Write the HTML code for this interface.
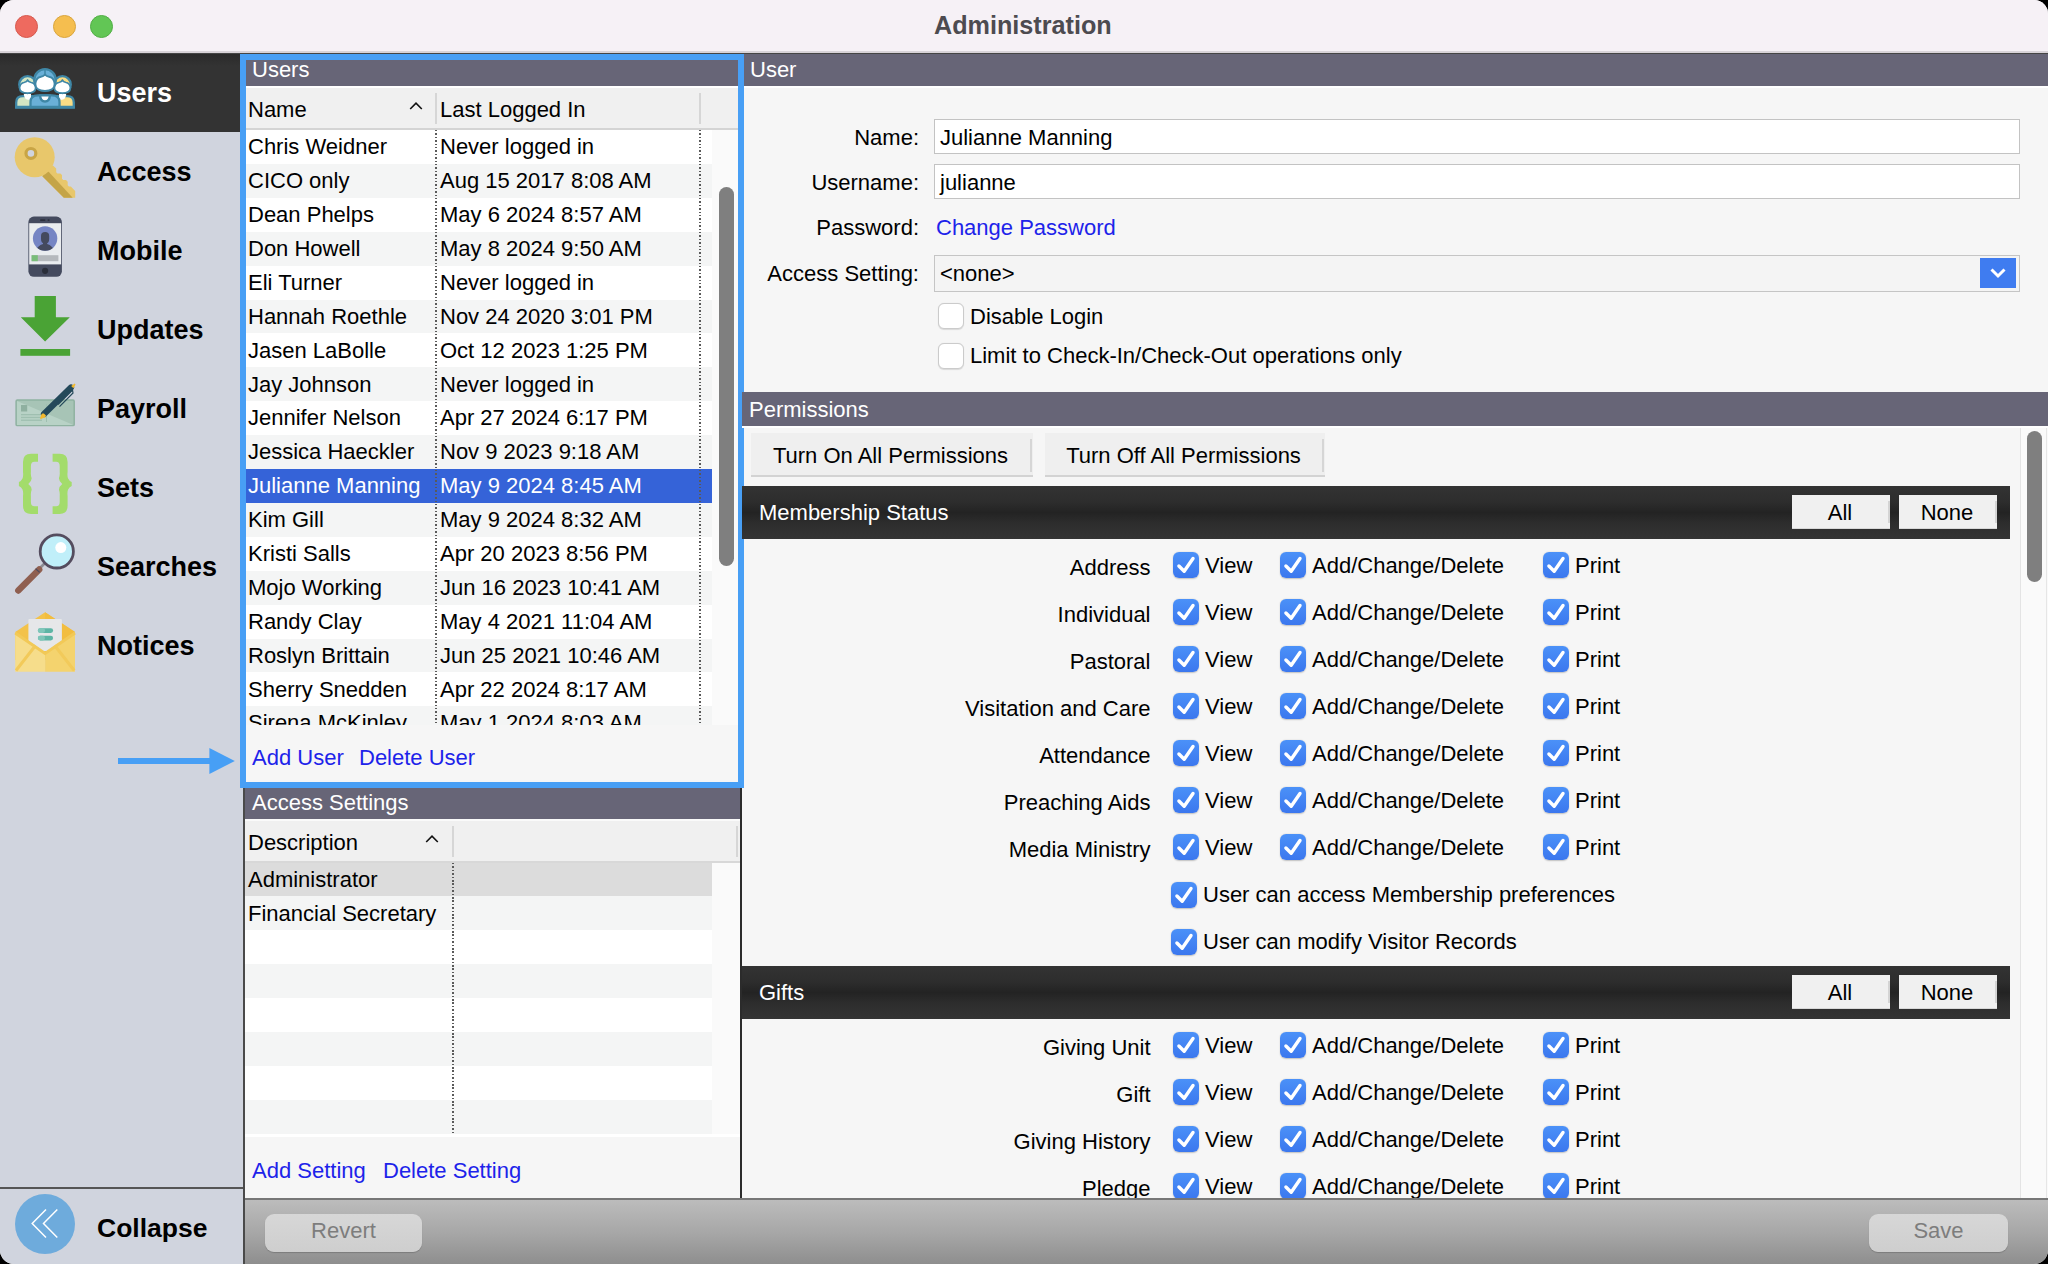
<!DOCTYPE html><html><head><meta charset="utf-8"><title>Administration</title><style>
*{box-sizing:border-box;margin:0;padding:0}
html,body{width:2048px;height:1264px;overflow:hidden;background:#000}
body{font-family:"Liberation Sans",sans-serif;font-size:22px;letter-spacing:0;color:#000;position:relative}
.abs{position:absolute}
#win{position:absolute;left:0;top:0;width:2048px;height:1264px;border-radius:14px;overflow:hidden;background:#f6f6f6}
.t{position:absolute;white-space:nowrap;line-height:1}
.cb{position:absolute;width:26px;height:26px;border-radius:6px;background:linear-gradient(#4b91f8,#3b77ee);box-shadow:0 0.5px 1.5px rgba(0,0,0,.22)}
.cb svg{position:absolute;left:0;top:0}
.cbe{position:absolute;width:26px;height:26px;border-radius:6px;background:#fff;border:1px solid #cbcbcb;box-shadow:0 0.5px 1px rgba(0,0,0,.12)}
.sec{position:absolute;left:742px;width:1268px;height:53px;background:linear-gradient(#333 0%,#2d2d2d 30%,#232323 50%,#2d2d2d 70%,#343434 100%)}
.sbtn{position:absolute;height:34px;width:98px;background:#f0f0f0}
.dot{position:absolute;width:1.6px;background:repeating-linear-gradient(#5a5a5a 0,#5a5a5a 1.5px,transparent 1.5px,transparent 3.4px)}
</style></head><body><div id="win">
<div class="abs" style="left:0px;top:0px;width:2048px;height:51px;background:#f6f1f6;"></div>
<div class="abs" style="left:0px;top:51px;width:2048px;height:1.5px;background:#d8d3d8;"></div>
<div class="abs" style="left:0px;top:52.5px;width:2048px;height:1.5px;background:rgba(0,0,0,.72);"></div>
<div class="abs" style="left:14.5px;top:14.5px;width:23px;height:23px;border-radius:50%;background:#ee6a5f;border:0.8px solid #d65a4f"></div>
<div class="abs" style="left:52.5px;top:14.5px;width:23px;height:23px;border-radius:50%;background:#f5be4f;border:0.8px solid #d9a53e"></div>
<div class="abs" style="left:89.5px;top:14.5px;width:23px;height:23px;border-radius:50%;background:#62c655;border:0.8px solid #51ae45"></div>
<div class="t" style="top:13.00px;left:934px;font-size:25.2px;font-weight:700;color:#4d4b50;">Administration</div>
<div class="abs" style="left:0px;top:54px;width:243px;height:1210px;background:#d0d4de;"></div>
<div class="abs" style="left:0px;top:54px;width:243px;height:77.7px;background:linear-gradient(#2a2a2a,#333 12px,#333);"></div>
<div class="abs" style="left:243px;top:54px;width:2px;height:1210px;background:#4a4a4a;"></div>
<div class="t" style="top:80.00px;left:97px;font-size:27px;font-weight:700;color:#fff;">Users</div>
<div class="t" style="top:159.00px;left:97px;font-size:27px;font-weight:700;color:#000;">Access</div>
<div class="t" style="top:238.00px;left:97px;font-size:27px;font-weight:700;color:#000;">Mobile</div>
<div class="t" style="top:317.00px;left:97px;font-size:27px;font-weight:700;color:#000;">Updates</div>
<div class="t" style="top:396.00px;left:97px;font-size:27px;font-weight:700;color:#000;">Payroll</div>
<div class="t" style="top:475.00px;left:97px;font-size:27px;font-weight:700;color:#000;">Sets</div>
<div class="t" style="top:554.00px;left:97px;font-size:27px;font-weight:700;color:#000;">Searches</div>
<div class="t" style="top:633.00px;left:97px;font-size:27px;font-weight:700;color:#000;">Notices</div>
<svg class="abs" style="left:0;top:54px" width="243" height="640" viewBox="0 54 243 640">
<!-- Users icon -->
<g stroke="#3f87a6" stroke-width="2.3" stroke-linejoin="round">
  <!-- left person -->
  <path d="M16.2 107 V102.5 Q16.2 96.2 23 96.2 H33 V107 Z" fill="#d3e6c3"/>
  <path d="M23.8 94 Q24.2 99.5 28 99.8 L31 99.8 V94 Z" fill="#fff" stroke="none"/>
  <circle cx="27.6" cy="84.6" r="8.4" fill="#d3e6c3"/>
  <path d="M19.6 87.5 Q20.5 83 24 82.5 Q26.8 82 27.6 80 Q28.4 82 31.2 82.5 Q34.7 83 35.6 87.5 V88 Q35.6 93 27.6 93 Q19.6 93 19.6 88 Z" fill="#fff" stroke-width="1.7"/>
  <!-- right person -->
  <path d="M73.8 107 V102.5 Q73.8 96.2 67 96.2 H57 V107 Z" fill="#f9dc85"/>
  <path d="M66.2 94 Q65.8 99.5 62 99.8 L59 99.8 V94 Z" fill="#fff" stroke="none"/>
  <circle cx="62.4" cy="84.6" r="8.4" fill="#f9dc85"/>
  <path d="M54.4 87.5 Q55.3 83 58.8 82.5 Q61.6 82 62.4 80 Q63.2 82 66 82.5 Q69.5 83 70.4 87.5 V88 Q70.4 93 62.4 93 Q54.4 93 54.4 88 Z" fill="#fff" stroke-width="1.7"/>
  <!-- center person -->
  <path d="M30.5 107 V102 Q30.5 95.3 38 95.3 H52 Q59.5 95.3 59.5 102 V107 Z" fill="#6ab0d8"/>
  <path d="M40 95.3 Q40.5 101.5 45 101.5 Q49.5 101.5 50 95.3 Z" fill="#fff"/>
  <circle cx="45" cy="80" r="10.8" fill="#6ab0d8"/>
  <path d="M35.5 83 Q36.3 77.8 40.2 77 Q43.8 76.4 45 74.5 Q46.2 76.4 49.8 77 Q53.7 77.8 54.5 83 V84.5 Q54.5 90.8 45 90.8 Q35.5 90.8 35.5 84.5 Z" fill="#fff" stroke-width="1.8"/>
  <path d="M45 74.5 V70" stroke-width="1.5"/>
  <path d="M15 107.6 H75" stroke-width="2.4"/>
</g>

<!-- Key -->
<g>
  <path d="M44 171 L53 165.4 L56.2 168.6 V172.3 L57.4 173.5 H60.4 L62 175.1 V178.8 L63.2 180 H66 L67.7 181.7 V185.3 L68.9 186.5 H70.8 L75.2 190.9 V197.7 H63.8 L42.3 176.2 Z" fill="#e8c76b"/>
  <path d="M42.3 176.2 L47.7 170.8 L72.7 197.7 H63.8 Z" fill="#c4a447"/>
  <circle cx="34.7" cy="157.2" r="20" fill="#e8c76b"/>
  <circle cx="30.9" cy="153.4" r="4.9" fill="#d0d4de" stroke="#c9a545" stroke-width="3.2"/>
</g>

<!-- Mobile -->
<g>
  <rect x="28.4" y="216.6" width="33.5" height="60.2" rx="5.5" fill="#444a5e"/>
  <rect x="29.2" y="223.2" width="31.9" height="41.2" fill="#e9ecef"/>
  <rect x="40" y="219.2" width="5.5" height="1.8" rx="0.9" fill="#2b2f3d"/>
  <rect x="47.5" y="219.2" width="2.2" height="1.8" rx="0.9" fill="#2b2f3d"/>
  <circle cx="45.1" cy="238.5" r="12.2" fill="#7585c4"/>
  <clipPath id="avc"><circle cx="45.1" cy="238.5" r="12.2"/></clipPath>
  <g clip-path="url(#avc)" fill="#444a5e">
    <path d="M41 236 Q41 232 45.1 232 Q49.2 232 49.2 236 V239 Q49.2 243.5 45.1 243.5 Q41 243.5 41 239 Z"/>
    <path d="M43 242 H47.2 V244 Q53 246 55 252 H35 Q37 246 43 244 Z"/>
  </g>
  <rect x="31.6" y="255.2" width="26.8" height="6" fill="#b5b9bd"/>
  <rect x="31.6" y="255.2" width="6.2" height="6" fill="#79bd79"/>
  <circle cx="45.1" cy="270.8" r="3.1" fill="#2a2e3a"/>
</g>

<!-- Updates -->
<g fill="#4aa335">
  <path d="M34.7 296 H55.9 V317.2 H69.8 L45.1 341.6 L20.8 317.2 H34.7 Z"/>
  <rect x="20.4" y="349" width="49.7" height="6.8"/>
</g>

<!-- Payroll -->
<g>
  <rect x="16.1" y="400.1" width="58.1" height="25.5" rx="1.2" fill="#a7c4b6" stroke="#8fb2a1" stroke-width="1.5"/>
  <path d="M17 401 L73.5 425 H17 Z" fill="#b8d2c6"/>
  <rect x="21" y="405" width="6.2" height="6.5" fill="#8fb0a0"/>
  <rect x="21" y="414" width="21" height="1.3" fill="#9fbfb0"/>
  <rect x="21" y="416.8" width="21" height="1.3" fill="#9fbfb0"/>
  <rect x="21" y="419.6" width="21" height="1.3" fill="#9fbfb0"/>
  <rect x="46" y="404" width="1" height="18" fill="#9fbfb0"/>
  <path d="M58 404.5 L72.5 390 L73 393 L59.5 406.7" fill="none" stroke="#24495a" stroke-width="1.2"/>
  <path d="M44 414 L71 387.5" stroke="#24495a" stroke-width="6.2" stroke-linecap="round"/>
  <path d="M40.3 418.8 L42.2 413.6 L45.8 417.2 Z" fill="#f2b92e"/>
  <path d="M43.8 413.6 Q41 413 40.2 418.9 Q45 418 46 415.5 Z" fill="#f2b92e"/>
  <path d="M71.2 386 L74.6 383.5 L75.5 384.6 L73.4 388.2 Z" fill="#f2b92e"/>
</g>

<!-- Sets -->
<path d="M38 453.8 H31 Q23 453.8 23 462 V472 Q23.5 476 22.5 478.5 Q21.5 480.8 18.9 482 V486 Q21.5 487.2 22.5 489.5 Q23.5 492 23 496 V505.5 Q23 513.9 31 513.9 H38 V506.3 H34.5 Q30.9 506.3 30.9 502 V496 Q30.6 492.5 31.6 490 Q32 487 28.3 484 Q32 481 31.6 478 Q30.6 475.5 30.9 472 V466 Q30.9 461.7 34.5 461.7 H38 Z" fill="#a3dc6b"/>
<path d="M 52.6 453.8 H 59.6 Q 67.6 453.8 67.6 462.0 V 472.0 Q 67.1 476.0 68.1 478.5 Q 69.1 480.8 71.7 482.0 V 486.0 Q 69.1 487.2 68.1 489.5 Q 67.1 492.0 67.6 496.0 V 505.5 Q 67.6 513.9 59.6 513.9 H 52.6 V 506.3 H 56.1 Q 59.7 506.3 59.7 502.0 V 496.0 Q 60.0 492.5 59.0 490.0 Q 58.6 487.0 62.3 484.0 Q 58.6 481.0 59.0 478.0 Q 60.0 475.5 59.7 472.0 V 466.0 Q 59.7 461.7 56.1 461.7 H 52.6 Z" fill="#a3dc6b"/>

<!-- Searches -->
<g>
  <path d="M40.5 567.5 L44.5 563.5" stroke="#8d8d95" stroke-width="2.6"/>
  <path d="M18.3 590.6 L39.2 569.5" stroke="#8f5f50" stroke-width="6.4" stroke-linecap="round"/>
  <path d="M35.6 568.6 L39.6 572.4" stroke="#4c4a5c" stroke-width="1.3"/>
  <circle cx="56.8" cy="551.4" r="16.6" fill="#c0eff9" stroke="#544c5e" stroke-width="2.8"/>
  <circle cx="60.8" cy="547.6" r="5.5" fill="#ffffff"/>
</g>

<!-- Notices -->
<g>
  <path d="M15.2 632 L45.1 612.3 L75 632 V660 H15.2 Z" fill="#f3c24a"/>
  <path d="M45.1 612.3 L75 632 V660 H45.1 Z" fill="#f2bd3f"/>
  <rect x="28.4" y="619" width="33.5" height="32" rx="1" fill="#e6e7e9"/>
  <rect x="37.9" y="628.3" width="15.2" height="4.6" rx="2.3" fill="#5db5a5"/>
  <rect x="37.9" y="635.8" width="15.2" height="4.6" rx="2.3" fill="#5db5a5"/>
  <rect x="37.9" y="628.3" width="7.2" height="4.6" rx="2.3" fill="#7fc6b9"/>
  <rect x="37.9" y="635.8" width="7.2" height="4.6" rx="2.3" fill="#7fc6b9"/>
  <path d="M15.2 632 L45.1 652.8 L45.1 671.8 H15.2 Z" fill="#f6dd8b"/>
  <path d="M75 632 L45.1 652.8 L45.1 671.8 H75 Z" fill="#f4d36e"/>
  <path d="M16 670.5 L35.5 645.5 M74.2 670.5 L54.7 645.5" stroke="#f2ca5a" stroke-width="3"/>
  <path d="M15.2 633 L45.1 653.5 L75 633" fill="none" stroke="#f2c957" stroke-width="3"/>
</g>
</svg>

<div class="abs" style="left:0px;top:1187px;width:243px;height:2px;background:#555555;"></div>
<div class="abs" style="left:15px;top:1194px;width:60px;height:60px;border-radius:50%;background:#6eabdc"></div>
<svg class="abs" style="left:15px;top:1194px" width="60" height="60"><path d="M42.3 15.5 L28.5 29.5 L42.3 43.5 M31 15.5 L17.2 29.5 L31 43.5" fill="none" stroke="#fff" stroke-width="1.5"/></svg>
<div class="t" style="top:1215.00px;left:97px;font-size:26.5px;font-weight:700;">Collapse</div>
<svg class="abs" style="left:110px;top:740px" width="130" height="40"><rect x="8" y="18" width="92" height="6" fill="#479ff5"/><path d="M99.4 8 L124.8 21 L99.4 34 Z" fill="#479ff5"/></svg>
<div class="abs" style="left:245px;top:54px;width:495px;height:32px;background:#676577;"></div>
<div class="t" style="top:59.00px;left:252px;color:#fff;">Users</div>
<div class="abs" style="left:245px;top:86px;width:495px;height:2px;background:#ffffff;"></div>
<div class="abs" style="left:245px;top:88px;width:495px;height:40px;background:#f0f0f0;"></div>
<div class="abs" style="left:245px;top:128px;width:495px;height:2px;background:#d4d4d4;"></div>
<div class="t" style="top:99.00px;left:248px;">Name</div>
<svg class="abs" style="left:408px;top:100px" width="16" height="12"><path d="M2.2 9 L8 3.2 L13.8 9" fill="none" stroke="#111" stroke-width="1.6"/></svg>
<div class="abs" style="left:435px;top:93px;width:1.5px;height:31px;background:#d6d6d6;"></div>
<div class="t" style="top:99.00px;left:440px;">Last Logged In</div>
<div class="abs" style="left:699px;top:93px;width:1.5px;height:31px;background:#d6d6d6;"></div>
<div class="abs" style="left:245px;top:130px;width:493px;height:595px;overflow:hidden;background:#fafafa">
<div class="abs" style="left:0px;top:0.0px;width:467px;height:34px;background:#ffffff;"></div>
<div class="t" style="top:6.00px;left:3px;">Chris Weidner</div>
<div class="t" style="top:6.00px;left:195px;">Never logged in</div>
<div class="abs" style="left:0px;top:33.9px;width:467px;height:34px;background:#f4f5f5;"></div>
<div class="t" style="top:40.00px;left:3px;">CICO only</div>
<div class="t" style="top:40.00px;left:195px;">Aug 15 2017 8:08 AM</div>
<div class="abs" style="left:0px;top:67.8px;width:467px;height:34px;background:#ffffff;"></div>
<div class="t" style="top:74.00px;left:3px;">Dean Phelps</div>
<div class="t" style="top:74.00px;left:195px;">May 6 2024 8:57 AM</div>
<div class="abs" style="left:0px;top:101.7px;width:467px;height:34px;background:#f4f5f5;"></div>
<div class="t" style="top:108.00px;left:3px;">Don Howell</div>
<div class="t" style="top:108.00px;left:195px;">May 8 2024 9:50 AM</div>
<div class="abs" style="left:0px;top:135.6px;width:467px;height:34px;background:#ffffff;"></div>
<div class="t" style="top:142.00px;left:3px;">Eli Turner</div>
<div class="t" style="top:142.00px;left:195px;">Never logged in</div>
<div class="abs" style="left:0px;top:169.5px;width:467px;height:34px;background:#f4f5f5;"></div>
<div class="t" style="top:176.00px;left:3px;">Hannah Roethle</div>
<div class="t" style="top:176.00px;left:195px;">Nov 24 2020 3:01 PM</div>
<div class="abs" style="left:0px;top:203.4px;width:467px;height:34px;background:#ffffff;"></div>
<div class="t" style="top:210.00px;left:3px;">Jasen LaBolle</div>
<div class="t" style="top:210.00px;left:195px;">Oct 12 2023 1:25 PM</div>
<div class="abs" style="left:0px;top:237.3px;width:467px;height:34px;background:#f4f5f5;"></div>
<div class="t" style="top:244.00px;left:3px;">Jay Johnson</div>
<div class="t" style="top:244.00px;left:195px;">Never logged in</div>
<div class="abs" style="left:0px;top:271.2px;width:467px;height:34px;background:#ffffff;"></div>
<div class="t" style="top:277.00px;left:3px;">Jennifer Nelson</div>
<div class="t" style="top:277.00px;left:195px;">Apr 27 2024 6:17 PM</div>
<div class="abs" style="left:0px;top:305.1px;width:467px;height:34px;background:#f4f5f5;"></div>
<div class="t" style="top:311.00px;left:3px;">Jessica Haeckler</div>
<div class="t" style="top:311.00px;left:195px;">Nov 9 2023 9:18 AM</div>
<div class="abs" style="left:0px;top:339.0px;width:467px;height:34px;background:#3563d8;"></div>
<div class="t" style="top:345.00px;left:3px;color:#fff;">Julianne Manning</div>
<div class="t" style="top:345.00px;left:195px;color:#fff;">May 9 2024 8:45 AM</div>
<div class="abs" style="left:0px;top:372.9px;width:467px;height:34px;background:#f4f5f5;"></div>
<div class="t" style="top:379.00px;left:3px;">Kim Gill</div>
<div class="t" style="top:379.00px;left:195px;">May 9 2024 8:32 AM</div>
<div class="abs" style="left:0px;top:406.8px;width:467px;height:34px;background:#ffffff;"></div>
<div class="t" style="top:413.00px;left:3px;">Kristi Salls</div>
<div class="t" style="top:413.00px;left:195px;">Apr 20 2023 8:56 PM</div>
<div class="abs" style="left:0px;top:440.7px;width:467px;height:34px;background:#f4f5f5;"></div>
<div class="t" style="top:447.00px;left:3px;">Mojo Working</div>
<div class="t" style="top:447.00px;left:195px;">Jun 16 2023 10:41 AM</div>
<div class="abs" style="left:0px;top:474.6px;width:467px;height:34px;background:#ffffff;"></div>
<div class="t" style="top:481.00px;left:3px;">Randy Clay</div>
<div class="t" style="top:481.00px;left:195px;">May 4 2021 11:04 AM</div>
<div class="abs" style="left:0px;top:508.5px;width:467px;height:34px;background:#f4f5f5;"></div>
<div class="t" style="top:515.00px;left:3px;">Roslyn Brittain</div>
<div class="t" style="top:515.00px;left:195px;">Jun 25 2021 10:46 AM</div>
<div class="abs" style="left:0px;top:542.4px;width:467px;height:34px;background:#ffffff;"></div>
<div class="t" style="top:549.00px;left:3px;">Sherry Snedden</div>
<div class="t" style="top:549.00px;left:195px;">Apr 22 2024 8:17 AM</div>
<div class="abs" style="left:0px;top:576.3px;width:467px;height:34px;background:#f4f5f5;"></div>
<div class="t" style="top:582.00px;left:3px;">Sirena McKinley</div>
<div class="t" style="top:582.00px;left:195px;">May 1 2024 8:03 AM</div>
<div class="dot" style="left:190px;top:0;height:595px"></div>
<div class="dot" style="left:454px;top:0;height:595px"></div>
<div class="abs" style="left:474px;top:57px;width:15px;height:379px;background:#7f7f7f;border-radius:8px"></div>
</div>
<div class="t" style="top:747.00px;left:252px;color:#1d23ea;">Add User</div>
<div class="t" style="top:747.00px;left:359px;color:#1d23ea;">Delete User</div>
<div class="abs" style="left:245px;top:788px;width:495px;height:31px;background:#676577;"></div>
<div class="t" style="top:792.00px;left:252px;color:#fff;">Access Settings</div>
<div class="abs" style="left:245px;top:819px;width:495px;height:1.5px;background:#fafafa;"></div>
<div class="abs" style="left:245px;top:820.5px;width:495px;height:40.5px;background:#f0f0f0;"></div>
<div class="abs" style="left:245px;top:861px;width:495px;height:1.5px;background:#d8d8d8;"></div>
<div class="t" style="top:832.00px;left:248px;">Description</div>
<svg class="abs" style="left:424px;top:833px" width="16" height="12"><path d="M2.2 9 L8 3.2 L13.8 9" fill="none" stroke="#111" stroke-width="1.6"/></svg>
<div class="abs" style="left:452px;top:826px;width:1.5px;height:31px;background:#d6d6d6;"></div>
<div class="abs" style="left:736px;top:826px;width:1.5px;height:31px;background:#d6d6d6;"></div>
<div class="abs" style="left:245px;top:862.5px;width:495px;height:271.5px;overflow:hidden;background:#fafafa">
<div class="abs" style="left:0px;top:0.0px;width:467px;height:34px;background:#dcdcdc;"></div>
<div class="t" style="top:6.00px;left:3px;">Administrator</div>
<div class="abs" style="left:0px;top:33.9px;width:467px;height:34px;background:#f4f5f5;"></div>
<div class="t" style="top:40.00px;left:3px;">Financial Secretary</div>
<div class="abs" style="left:0px;top:67.8px;width:467px;height:34px;background:#ffffff;"></div>
<div class="abs" style="left:0px;top:101.7px;width:467px;height:34px;background:#f4f5f5;"></div>
<div class="abs" style="left:0px;top:135.6px;width:467px;height:34px;background:#ffffff;"></div>
<div class="abs" style="left:0px;top:169.5px;width:467px;height:34px;background:#f4f5f5;"></div>
<div class="abs" style="left:0px;top:203.4px;width:467px;height:34px;background:#ffffff;"></div>
<div class="abs" style="left:0px;top:237.3px;width:467px;height:34px;background:#f4f5f5;"></div>
<div class="abs" style="left:0px;top:271.2px;width:467px;height:34px;background:#ffffff;"></div>
<div class="dot" style="left:207px;top:0;height:272px"></div>
</div>
<div class="abs" style="left:245px;top:1134px;width:495px;height:3px;background:#ffffff;"></div>
<div class="t" style="top:1160.00px;left:252px;color:#1d23ea;">Add Setting</div>
<div class="t" style="top:1160.00px;left:383px;color:#1d23ea;">Delete Setting</div>
<div class="abs" style="left:740px;top:788px;width:1.8px;height:410px;background:#2b2b2b;"></div>
<div class="abs" style="left:240px;top:54px;width:504px;height:734px;border:6px solid #489ff5"></div>
<div class="abs" style="left:744px;top:54px;width:1304px;height:32px;background:#676577;"></div>
<div class="t" style="top:59.00px;left:750px;color:#fff;">User</div>
<div class="abs" style="left:744px;top:86px;width:1304px;height:2px;background:#ffffff;"></div>
<div class="t" style="top:127.00px;right:1129px;">Name:</div>
<div class="t" style="top:172.00px;right:1129px;">Username:</div>
<div class="t" style="top:217.00px;right:1129px;">Password:</div>
<div class="t" style="top:263.00px;right:1129px;">Access Setting:</div>
<div class="abs" style="left:934px;top:119px;width:1086px;height:35px;background:#fff;border:1.5px solid #c3c3c3"></div>
<div class="t" style="top:127.00px;left:940px;">Julianne Manning</div>
<div class="abs" style="left:934px;top:164px;width:1086px;height:35px;background:#fff;border:1.5px solid #c3c3c3"></div>
<div class="t" style="top:172.00px;left:940px;">julianne</div>
<div class="t" style="top:217.00px;left:936px;color:#1d23ea;">Change Password</div>
<div class="abs" style="left:934px;top:254.5px;width:1086px;height:37px;background:#f4f4f4;border:1.5px solid #c5c5c5"></div>
<div class="t" style="top:263.00px;left:940px;">&lt;none&gt;</div>
<div class="abs" style="left:1980px;top:258px;width:36px;height:30px;background:#3f7cf0;"></div>
<svg class="abs" style="left:1980px;top:258px" width="36" height="30"><path d="M11.5 11.5 L18 18 L24.5 11.5" fill="none" stroke="#fff" stroke-width="3"/></svg>
<div class="cbe" style="left:937.5px;top:303.3px"></div>
<div class="t" style="top:306.00px;left:970px;">Disable Login</div>
<div class="cbe" style="left:937.5px;top:343px"></div>
<div class="t" style="top:345.00px;left:970px;">Limit to Check-In/Check-Out operations only</div>
<div class="abs" style="left:742px;top:392px;width:1306px;height:34px;background:#676577;"></div>
<div class="t" style="top:399.00px;left:749px;color:#fff;">Permissions</div>
<div class="abs" style="left:742px;top:426px;width:1306px;height:1.5px;background:#ffffff;"></div>
<div class="abs" style="left:2020px;top:427.5px;width:28px;height:771px;background:#fafafa;border-left:1.5px solid #e4e4e4"></div>
<div class="abs" style="left:2027px;top:431px;width:15px;height:151px;background:#7f7f7f;border-radius:8px"></div>
<div class="abs" style="left:2046px;top:427.5px;width:1px;height:771px;background:#e6e6e6;"></div>
<div class="abs" style="left:751px;top:433px;width:282px;height:44px;background:#efefef;border-bottom:2px solid #d3d3d3"></div>
<div class="abs" style="left:1030px;top:439px;width:2px;height:33px;background:#d6d6d6;"></div>
<div class="t" style="top:445.00px;left:751px;width:279px;text-align:center;">Turn On All Permissions</div>
<div class="abs" style="left:1045px;top:433px;width:280px;height:44px;background:#efefef;border-bottom:2px solid #d3d3d3"></div>
<div class="abs" style="left:1322px;top:439px;width:2px;height:33px;background:#d6d6d6;"></div>
<div class="t" style="top:445.00px;left:1045px;width:277px;text-align:center;">Turn Off All Permissions</div>
<div class="abs" style="left:742px;top:427.5px;width:1278px;height:770.5px;overflow:hidden">
<div class="abs" style="left:-742px;top:-427.5px;width:2048px;height:1264px">
<div class="sec" style="top:486px"></div>
<div class="t" style="top:502.00px;left:759px;color:#fff;">Membership Status</div>
<div class="sbtn" style="left:1792px;top:495px"></div>
<div class="abs" style="left:1888px;top:501px;width:2px;height:22px;background:#d4d4d4;"></div>
<div class="abs" style="left:1792px;top:527.5px;width:98px;height:1.5px;background:#d8d8d8;"></div>
<div class="t" style="top:502.00px;left:1792px;width:96px;text-align:center;">All</div>
<div class="sbtn" style="left:1899px;top:495px"></div>
<div class="abs" style="left:1995px;top:501px;width:2px;height:22px;background:#d4d4d4;"></div>
<div class="abs" style="left:1899px;top:527.5px;width:98px;height:1.5px;background:#d8d8d8;"></div>
<div class="t" style="top:502.00px;left:1899px;width:96px;text-align:center;">None</div>
<div class="t" style="top:557.00px;right:897.5px;">Address</div>
<div class="cb" style="left:1173px;top:552.3px"><svg width="26" height="26"><path d="M5.9 14 L11.2 19.3 L20 6.5" fill="none" stroke="#fff" stroke-width="3.4" stroke-linecap="round" stroke-linejoin="round"/></svg></div>
<div class="t" style="top:555.00px;left:1205px;">View</div>
<div class="cb" style="left:1280px;top:552.3px"><svg width="26" height="26"><path d="M5.9 14 L11.2 19.3 L20 6.5" fill="none" stroke="#fff" stroke-width="3.4" stroke-linecap="round" stroke-linejoin="round"/></svg></div>
<div class="t" style="top:555.00px;left:1312px;">Add/Change/Delete</div>
<div class="cb" style="left:1543px;top:552.3px"><svg width="26" height="26"><path d="M5.9 14 L11.2 19.3 L20 6.5" fill="none" stroke="#fff" stroke-width="3.4" stroke-linecap="round" stroke-linejoin="round"/></svg></div>
<div class="t" style="top:555.00px;left:1575px;">Print</div>
<div class="t" style="top:604.00px;right:897.5px;">Individual</div>
<div class="cb" style="left:1173px;top:599.3px"><svg width="26" height="26"><path d="M5.9 14 L11.2 19.3 L20 6.5" fill="none" stroke="#fff" stroke-width="3.4" stroke-linecap="round" stroke-linejoin="round"/></svg></div>
<div class="t" style="top:602.00px;left:1205px;">View</div>
<div class="cb" style="left:1280px;top:599.3px"><svg width="26" height="26"><path d="M5.9 14 L11.2 19.3 L20 6.5" fill="none" stroke="#fff" stroke-width="3.4" stroke-linecap="round" stroke-linejoin="round"/></svg></div>
<div class="t" style="top:602.00px;left:1312px;">Add/Change/Delete</div>
<div class="cb" style="left:1543px;top:599.3px"><svg width="26" height="26"><path d="M5.9 14 L11.2 19.3 L20 6.5" fill="none" stroke="#fff" stroke-width="3.4" stroke-linecap="round" stroke-linejoin="round"/></svg></div>
<div class="t" style="top:602.00px;left:1575px;">Print</div>
<div class="t" style="top:651.00px;right:897.5px;">Pastoral</div>
<div class="cb" style="left:1173px;top:646.3px"><svg width="26" height="26"><path d="M5.9 14 L11.2 19.3 L20 6.5" fill="none" stroke="#fff" stroke-width="3.4" stroke-linecap="round" stroke-linejoin="round"/></svg></div>
<div class="t" style="top:649.00px;left:1205px;">View</div>
<div class="cb" style="left:1280px;top:646.3px"><svg width="26" height="26"><path d="M5.9 14 L11.2 19.3 L20 6.5" fill="none" stroke="#fff" stroke-width="3.4" stroke-linecap="round" stroke-linejoin="round"/></svg></div>
<div class="t" style="top:649.00px;left:1312px;">Add/Change/Delete</div>
<div class="cb" style="left:1543px;top:646.3px"><svg width="26" height="26"><path d="M5.9 14 L11.2 19.3 L20 6.5" fill="none" stroke="#fff" stroke-width="3.4" stroke-linecap="round" stroke-linejoin="round"/></svg></div>
<div class="t" style="top:649.00px;left:1575px;">Print</div>
<div class="t" style="top:698.00px;right:897.5px;">Visitation and Care</div>
<div class="cb" style="left:1173px;top:693.3px"><svg width="26" height="26"><path d="M5.9 14 L11.2 19.3 L20 6.5" fill="none" stroke="#fff" stroke-width="3.4" stroke-linecap="round" stroke-linejoin="round"/></svg></div>
<div class="t" style="top:696.00px;left:1205px;">View</div>
<div class="cb" style="left:1280px;top:693.3px"><svg width="26" height="26"><path d="M5.9 14 L11.2 19.3 L20 6.5" fill="none" stroke="#fff" stroke-width="3.4" stroke-linecap="round" stroke-linejoin="round"/></svg></div>
<div class="t" style="top:696.00px;left:1312px;">Add/Change/Delete</div>
<div class="cb" style="left:1543px;top:693.3px"><svg width="26" height="26"><path d="M5.9 14 L11.2 19.3 L20 6.5" fill="none" stroke="#fff" stroke-width="3.4" stroke-linecap="round" stroke-linejoin="round"/></svg></div>
<div class="t" style="top:696.00px;left:1575px;">Print</div>
<div class="t" style="top:745.00px;right:897.5px;">Attendance</div>
<div class="cb" style="left:1173px;top:740.3px"><svg width="26" height="26"><path d="M5.9 14 L11.2 19.3 L20 6.5" fill="none" stroke="#fff" stroke-width="3.4" stroke-linecap="round" stroke-linejoin="round"/></svg></div>
<div class="t" style="top:743.00px;left:1205px;">View</div>
<div class="cb" style="left:1280px;top:740.3px"><svg width="26" height="26"><path d="M5.9 14 L11.2 19.3 L20 6.5" fill="none" stroke="#fff" stroke-width="3.4" stroke-linecap="round" stroke-linejoin="round"/></svg></div>
<div class="t" style="top:743.00px;left:1312px;">Add/Change/Delete</div>
<div class="cb" style="left:1543px;top:740.3px"><svg width="26" height="26"><path d="M5.9 14 L11.2 19.3 L20 6.5" fill="none" stroke="#fff" stroke-width="3.4" stroke-linecap="round" stroke-linejoin="round"/></svg></div>
<div class="t" style="top:743.00px;left:1575px;">Print</div>
<div class="t" style="top:792.00px;right:897.5px;">Preaching Aids</div>
<div class="cb" style="left:1173px;top:787.3px"><svg width="26" height="26"><path d="M5.9 14 L11.2 19.3 L20 6.5" fill="none" stroke="#fff" stroke-width="3.4" stroke-linecap="round" stroke-linejoin="round"/></svg></div>
<div class="t" style="top:790.00px;left:1205px;">View</div>
<div class="cb" style="left:1280px;top:787.3px"><svg width="26" height="26"><path d="M5.9 14 L11.2 19.3 L20 6.5" fill="none" stroke="#fff" stroke-width="3.4" stroke-linecap="round" stroke-linejoin="round"/></svg></div>
<div class="t" style="top:790.00px;left:1312px;">Add/Change/Delete</div>
<div class="cb" style="left:1543px;top:787.3px"><svg width="26" height="26"><path d="M5.9 14 L11.2 19.3 L20 6.5" fill="none" stroke="#fff" stroke-width="3.4" stroke-linecap="round" stroke-linejoin="round"/></svg></div>
<div class="t" style="top:790.00px;left:1575px;">Print</div>
<div class="t" style="top:839.00px;right:897.5px;">Media Ministry</div>
<div class="cb" style="left:1173px;top:834.3px"><svg width="26" height="26"><path d="M5.9 14 L11.2 19.3 L20 6.5" fill="none" stroke="#fff" stroke-width="3.4" stroke-linecap="round" stroke-linejoin="round"/></svg></div>
<div class="t" style="top:837.00px;left:1205px;">View</div>
<div class="cb" style="left:1280px;top:834.3px"><svg width="26" height="26"><path d="M5.9 14 L11.2 19.3 L20 6.5" fill="none" stroke="#fff" stroke-width="3.4" stroke-linecap="round" stroke-linejoin="round"/></svg></div>
<div class="t" style="top:837.00px;left:1312px;">Add/Change/Delete</div>
<div class="cb" style="left:1543px;top:834.3px"><svg width="26" height="26"><path d="M5.9 14 L11.2 19.3 L20 6.5" fill="none" stroke="#fff" stroke-width="3.4" stroke-linecap="round" stroke-linejoin="round"/></svg></div>
<div class="t" style="top:837.00px;left:1575px;">Print</div>
<div class="cb" style="left:1171px;top:881.8px"><svg width="26" height="26"><path d="M5.9 14 L11.2 19.3 L20 6.5" fill="none" stroke="#fff" stroke-width="3.4" stroke-linecap="round" stroke-linejoin="round"/></svg></div>
<div class="t" style="top:884.00px;left:1203px;">User can access Membership preferences</div>
<div class="cb" style="left:1171px;top:928.8px"><svg width="26" height="26"><path d="M5.9 14 L11.2 19.3 L20 6.5" fill="none" stroke="#fff" stroke-width="3.4" stroke-linecap="round" stroke-linejoin="round"/></svg></div>
<div class="t" style="top:931.00px;left:1203px;">User can modify Visitor Records</div>
<div class="sec" style="top:966px"></div>
<div class="t" style="top:982.00px;left:759px;color:#fff;">Gifts</div>
<div class="sbtn" style="left:1792px;top:975px"></div>
<div class="abs" style="left:1888px;top:981px;width:2px;height:22px;background:#d4d4d4;"></div>
<div class="abs" style="left:1792px;top:1007.5px;width:98px;height:1.5px;background:#d8d8d8;"></div>
<div class="t" style="top:982.00px;left:1792px;width:96px;text-align:center;">All</div>
<div class="sbtn" style="left:1899px;top:975px"></div>
<div class="abs" style="left:1995px;top:981px;width:2px;height:22px;background:#d4d4d4;"></div>
<div class="abs" style="left:1899px;top:1007.5px;width:98px;height:1.5px;background:#d8d8d8;"></div>
<div class="t" style="top:982.00px;left:1899px;width:96px;text-align:center;">None</div>
<div class="t" style="top:1037.00px;right:897.5px;">Giving Unit</div>
<div class="cb" style="left:1173px;top:1032.3px"><svg width="26" height="26"><path d="M5.9 14 L11.2 19.3 L20 6.5" fill="none" stroke="#fff" stroke-width="3.4" stroke-linecap="round" stroke-linejoin="round"/></svg></div>
<div class="t" style="top:1035.00px;left:1205px;">View</div>
<div class="cb" style="left:1280px;top:1032.3px"><svg width="26" height="26"><path d="M5.9 14 L11.2 19.3 L20 6.5" fill="none" stroke="#fff" stroke-width="3.4" stroke-linecap="round" stroke-linejoin="round"/></svg></div>
<div class="t" style="top:1035.00px;left:1312px;">Add/Change/Delete</div>
<div class="cb" style="left:1543px;top:1032.3px"><svg width="26" height="26"><path d="M5.9 14 L11.2 19.3 L20 6.5" fill="none" stroke="#fff" stroke-width="3.4" stroke-linecap="round" stroke-linejoin="round"/></svg></div>
<div class="t" style="top:1035.00px;left:1575px;">Print</div>
<div class="t" style="top:1084.00px;right:897.5px;">Gift</div>
<div class="cb" style="left:1173px;top:1079.3px"><svg width="26" height="26"><path d="M5.9 14 L11.2 19.3 L20 6.5" fill="none" stroke="#fff" stroke-width="3.4" stroke-linecap="round" stroke-linejoin="round"/></svg></div>
<div class="t" style="top:1082.00px;left:1205px;">View</div>
<div class="cb" style="left:1280px;top:1079.3px"><svg width="26" height="26"><path d="M5.9 14 L11.2 19.3 L20 6.5" fill="none" stroke="#fff" stroke-width="3.4" stroke-linecap="round" stroke-linejoin="round"/></svg></div>
<div class="t" style="top:1082.00px;left:1312px;">Add/Change/Delete</div>
<div class="cb" style="left:1543px;top:1079.3px"><svg width="26" height="26"><path d="M5.9 14 L11.2 19.3 L20 6.5" fill="none" stroke="#fff" stroke-width="3.4" stroke-linecap="round" stroke-linejoin="round"/></svg></div>
<div class="t" style="top:1082.00px;left:1575px;">Print</div>
<div class="t" style="top:1131.00px;right:897.5px;">Giving History</div>
<div class="cb" style="left:1173px;top:1126.3px"><svg width="26" height="26"><path d="M5.9 14 L11.2 19.3 L20 6.5" fill="none" stroke="#fff" stroke-width="3.4" stroke-linecap="round" stroke-linejoin="round"/></svg></div>
<div class="t" style="top:1129.00px;left:1205px;">View</div>
<div class="cb" style="left:1280px;top:1126.3px"><svg width="26" height="26"><path d="M5.9 14 L11.2 19.3 L20 6.5" fill="none" stroke="#fff" stroke-width="3.4" stroke-linecap="round" stroke-linejoin="round"/></svg></div>
<div class="t" style="top:1129.00px;left:1312px;">Add/Change/Delete</div>
<div class="cb" style="left:1543px;top:1126.3px"><svg width="26" height="26"><path d="M5.9 14 L11.2 19.3 L20 6.5" fill="none" stroke="#fff" stroke-width="3.4" stroke-linecap="round" stroke-linejoin="round"/></svg></div>
<div class="t" style="top:1129.00px;left:1575px;">Print</div>
<div class="t" style="top:1178.00px;right:897.5px;">Pledge</div>
<div class="cb" style="left:1173px;top:1173.3px"><svg width="26" height="26"><path d="M5.9 14 L11.2 19.3 L20 6.5" fill="none" stroke="#fff" stroke-width="3.4" stroke-linecap="round" stroke-linejoin="round"/></svg></div>
<div class="t" style="top:1176.00px;left:1205px;">View</div>
<div class="cb" style="left:1280px;top:1173.3px"><svg width="26" height="26"><path d="M5.9 14 L11.2 19.3 L20 6.5" fill="none" stroke="#fff" stroke-width="3.4" stroke-linecap="round" stroke-linejoin="round"/></svg></div>
<div class="t" style="top:1176.00px;left:1312px;">Add/Change/Delete</div>
<div class="cb" style="left:1543px;top:1173.3px"><svg width="26" height="26"><path d="M5.9 14 L11.2 19.3 L20 6.5" fill="none" stroke="#fff" stroke-width="3.4" stroke-linecap="round" stroke-linejoin="round"/></svg></div>
<div class="t" style="top:1176.00px;left:1575px;">Print</div>
</div></div>
<div class="abs" style="left:245px;top:1198px;width:1803px;height:66px;background:linear-gradient(#777 0,#777 2px,#bcbcbc 2px,#a6a6a6 55%,#8e8e8e 100%);"></div>
<div class="abs" style="left:265px;top:1214px;width:157px;height:38px;background:linear-gradient(#d7d7d7,#cecece);border-radius:9px;box-shadow:0 1px 1px rgba(0,0,0,.18)"></div>
<div class="t" style="top:1220.00px;left:265px;width:157px;text-align:center;color:#7d7d7d;">Revert</div>
<div class="abs" style="left:1869px;top:1214px;width:139px;height:38px;background:linear-gradient(#d7d7d7,#cecece);border-radius:9px;box-shadow:0 1px 1px rgba(0,0,0,.18)"></div>
<div class="t" style="top:1220.00px;left:1869px;width:139px;text-align:center;color:#7d7d7d;">Save</div>
</div></body></html>
